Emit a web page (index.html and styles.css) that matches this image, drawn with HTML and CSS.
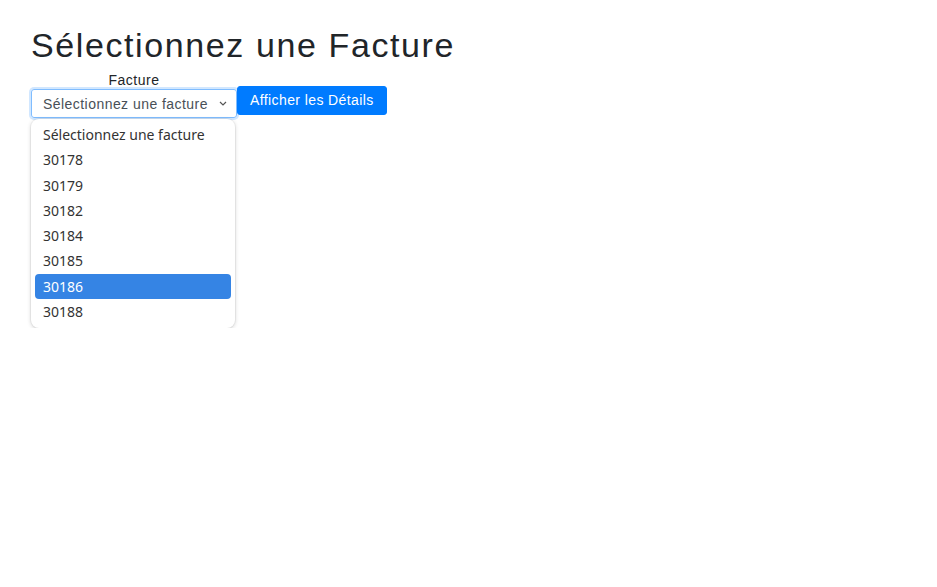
FILE: index.html
```html
<!DOCTYPE html>
<html lang="fr">
<head>
<meta charset="utf-8">
<title>Sélectionnez une Facture</title>
<link rel="stylesheet" href="styles.css">
</head>
<body>
<div class="page">
  <h1 class="title">Sélectionnez une Facture</h1>
  <div class="form-row">
    <div class="field">
      <div class="field-label">Facture</div>
      <div class="select">
        <span class="select-text">Sélectionnez une facture</span>
        <svg class="chevron" width="8" height="5" viewBox="0 0 8 5"><path d="M1 1l3 3 3-3" fill="none" stroke="#555" stroke-width="1.2"/></svg>
      </div>
      <div class="invoice-menu">
        <div class="menu-item">Sélectionnez une facture</div>
        <div class="menu-item">30178</div>
        <div class="menu-item">30179</div>
        <div class="menu-item">30182</div>
        <div class="menu-item">30184</div>
        <div class="menu-item">30185</div>
        <div class="menu-item is-active">30186</div>
        <div class="menu-item">30188</div>
      </div>
    </div>
    <div class="btn">Afficher les Détails</div>
  </div>
</div>
</body>
</html>
```

FILE: styles.css
```css
html, body {
  margin: 0;
  padding: 0;
  background: #fff;
}
body {
  font-family: "Liberation Sans", Arial, sans-serif;
  color: #212529;
}
.page {
  padding: 25px 0 0 31px;
}
.title {
  margin: 0;
  font-size: 34px;
  font-weight: 400;
  letter-spacing: 1.6px;
  line-height: 40px;
  color: #212529;
}
.form-row {
  display: flex;
  align-items: flex-start;
  margin-top: 7px;
}
.field {
  display: flex;
  flex-direction: column;
  align-items: center;
  width: 206px;
}
.field-label {
  font-size: 14px;
  letter-spacing: 0.5px;
  line-height: 16px;
  color: #212529;
  margin-bottom: 1px;
}
.select {
  box-sizing: border-box;
  height: 29px;
  width: 206px;
  border: 1px solid #80bdff;
  border-radius: 3px;
  box-shadow: 0 0 0 2px rgba(0, 123, 255, 0.18);
  display: flex;
  align-items: center;
  justify-content: space-between;
  padding: 0 9px 0 11px;
  font-size: 14px;
  letter-spacing: 0.45px;
  color: #495057;
}
.chevron {
  display: block;
}
.invoice-menu {
  align-self: flex-start;
  box-sizing: border-box;
  width: 204px;
  margin-top: 1px;
  padding: 3px 4px 4px;
  background: #fff;
  border-radius: 8px;
  box-shadow: 0 1px 4px rgba(0, 0, 0, 0.18), 0 0 0 1px rgba(0, 0, 0, 0.04);
  font-family: "Noto Sans", "Open Sans", sans-serif;
  font-size: 14px;
  color: #333;
}
.menu-item {
  height: 25.3px;
  line-height: 25px;
  padding-left: 8px;
  border-radius: 4px;
}
.menu-item.is-active {
  background: #3584e4;
  color: #fff;
}
.btn {
  box-sizing: border-box;
  height: 29px;
  line-height: 27px;
  margin-top: 14px;
  padding: 0 12px;
  border: 1px solid #007bff;
  border-radius: 3px;
  background: #007bff;
  color: #fff;
  font-size: 14px;
  letter-spacing: 0.4px;
}
```
